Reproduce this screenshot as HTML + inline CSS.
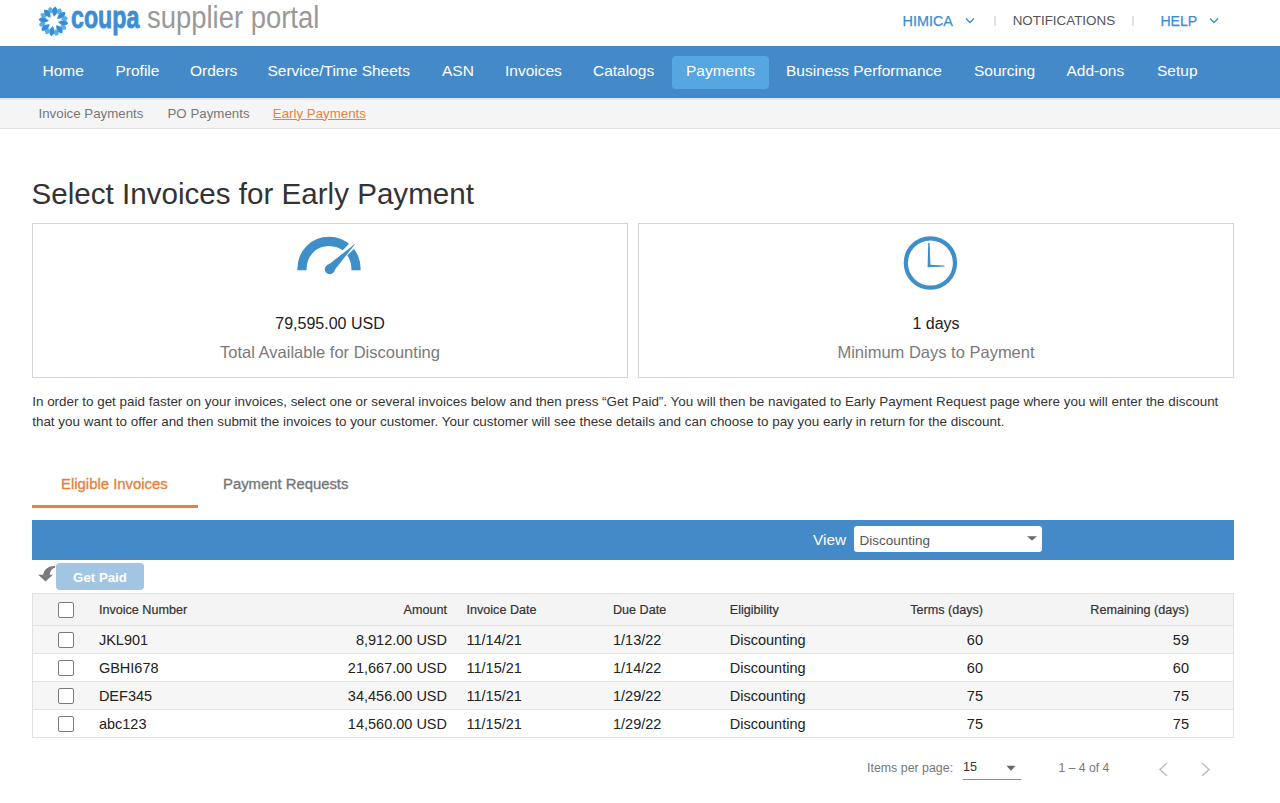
<!DOCTYPE html>
<html><head><meta charset="utf-8">
<style>
*{box-sizing:border-box;margin:0;padding:0}
html,body{width:1280px;height:803px;overflow:hidden;background:#fff;font-family:"Liberation Sans",sans-serif;color:#333}
.a{position:absolute;white-space:nowrap;line-height:1}
.nav{font-size:15.5px;color:#fff;top:62.8px}
.sub{font-size:13.3px;color:#777;top:106.7px}
.med{-webkit-text-stroke:0.35px currentColor}
.hd{font-size:12.6px;color:#333;-webkit-text-stroke:0.2px #333}
.cell{font-size:14.5px;color:#222}
.cb{position:absolute;left:58px;width:16px;height:16px;border:1px solid #7b7b7b;border-radius:2px;background:#fff}
.rowbg{position:absolute;left:33px;width:1200px;height:28px;border-bottom:1px solid #e1e1e1}
</style></head>
<body>
<!-- header -->
<svg class="a" style="left:36px;top:6px" width="34" height="31" viewBox="0 0 34 31">
  <g><path d="M21.46 8.51 Q27.70 7.38 24.96 2.56 Q19.43 2.50 21.46 8.51Z" fill="#4cb4e7"/><path d="M25.15 13.40 Q30.36 17.01 31.83 11.67 Q27.95 7.71 25.15 13.40Z" fill="#4cb4e7"/><path d="M24.29 19.46 Q25.42 25.70 30.24 22.96 Q30.30 17.43 24.29 19.46Z" fill="#4cb4e7"/><path d="M19.40 23.15 Q15.79 28.36 21.13 29.83 Q25.09 25.95 19.40 23.15Z" fill="#4cb4e7"/><path d="M13.34 22.29 Q7.10 23.42 9.84 28.24 Q15.37 28.30 13.34 22.29Z" fill="#4cb4e7"/><path d="M9.65 17.40 Q4.44 13.79 2.97 19.13 Q6.85 23.09 9.65 17.40Z" fill="#4cb4e7"/><path d="M10.51 11.34 Q9.38 5.10 4.56 7.84 Q4.50 13.37 10.51 11.34Z" fill="#4cb4e7"/><path d="M15.40 7.65 Q19.01 2.44 13.67 0.97 Q9.71 4.85 15.40 7.65Z" fill="#4cb4e7"/><path d="M18.04 10.84 Q24.29 5.21 19.49 0.55 Q13.59 3.71 18.04 10.84Z" fill="#3a8bd6"/><path d="M21.07 12.63 Q29.47 13.06 29.38 6.37 Q22.97 4.44 21.07 12.63Z" fill="#3a8bd6"/><path d="M21.96 16.04 Q27.59 22.29 32.25 17.49 Q29.09 11.59 21.96 16.04Z" fill="#3a8bd6"/><path d="M20.17 19.07 Q19.74 27.47 26.43 27.38 Q28.36 20.97 20.17 19.07Z" fill="#3a8bd6"/><path d="M16.76 19.96 Q10.51 25.59 15.31 30.25 Q21.21 27.09 16.76 19.96Z" fill="#3a8bd6"/><path d="M13.73 18.17 Q5.33 17.74 5.42 24.43 Q11.83 26.36 13.73 18.17Z" fill="#3a8bd6"/><path d="M12.84 14.76 Q7.21 8.51 2.55 13.31 Q5.71 19.21 12.84 14.76Z" fill="#3a8bd6"/><path d="M14.63 11.73 Q15.06 3.33 8.37 3.42 Q6.44 9.83 14.63 11.73Z" fill="#3a8bd6"/></g>
</svg>
<div class="a" style="left:70.8px;top:1.5px;font-size:28px;font-weight:bold;color:#3b8dd6;-webkit-text-stroke:0.7px #3b8dd6;transform-origin:0 0;transform:scale(0.83,1.13)">coupa</div>
<div class="a" style="left:147px;top:2.3px;font-size:31px;color:#999;transform-origin:0 0;transform:scaleX(0.885)">supplier portal</div>

<div class="a" style="left:902.5px;top:14px;font-size:14.4px;color:#3b8dd6;-webkit-text-stroke:0.25px #3b8dd6">HIMICA</div>
<svg class="a" style="left:964px;top:16px" width="12" height="9" viewBox="0 0 12 9"><path d="M2 2.5 L6 6.5 L10 2.5" fill="none" stroke="#3b8dd6" stroke-width="1.4"/></svg>
<div class="a" style="left:994px;top:15.5px;width:1.5px;height:10px;background:#dfe3e8"></div>
<div class="a" style="left:1012.7px;top:14.4px;font-size:13.4px;color:#555">NOTIFICATIONS</div>
<div class="a" style="left:1132px;top:15.5px;width:1.5px;height:10px;background:#dfe3e8"></div>
<div class="a" style="left:1160.4px;top:14.3px;font-size:14.1px;color:#3b8dd6;-webkit-text-stroke:0.25px #3b8dd6">HELP</div>
<svg class="a" style="left:1208px;top:16px" width="12" height="9" viewBox="0 0 12 9"><path d="M2 2.5 L6 6.5 L10 2.5" fill="none" stroke="#3b8dd6" stroke-width="1.4"/></svg>

<!-- nav -->
<div class="a" style="left:0;top:46px;width:1280px;height:52px;background:#458ac8"></div>
<div class="a" style="left:672px;top:56px;width:97px;height:33px;background:#56a7df;border-radius:4px"></div>
<div class="a nav" style="left:42.5px">Home</div>
<div class="a nav" style="left:115.5px">Profile</div>
<div class="a nav" style="left:190px">Orders</div>
<div class="a nav" style="left:267.5px">Service/Time Sheets</div>
<div class="a nav" style="left:442px">ASN</div>
<div class="a nav" style="left:505px">Invoices</div>
<div class="a nav" style="left:593px">Catalogs</div>
<div class="a nav" style="left:686px">Payments</div>
<div class="a nav" style="left:786px">Business Performance</div>
<div class="a nav" style="left:974px">Sourcing</div>
<div class="a nav" style="left:1066.5px">Add-ons</div>
<div class="a nav" style="left:1157px">Setup</div>

<!-- subnav -->
<div class="a" style="left:0;top:98px;width:1280px;height:31px;background:#f5f5f5;border-top:2px solid #e0e6ec;border-bottom:1px solid #e4e4e4"></div>
<div class="a sub" style="left:38.5px">Invoice Payments</div>
<div class="a sub" style="left:167.5px">PO Payments</div>
<div class="a sub" style="left:272.8px;color:#e5833b;text-decoration:underline">Early Payments</div>

<!-- title -->
<div class="a" style="left:31.5px;top:178.9px;font-size:29.6px;color:#333">Select Invoices for Early Payment</div>

<!-- cards -->
<div class="a" style="left:32px;top:223px;width:596px;height:155px;border:1px solid #d3d3d3"></div>
<div class="a" style="left:638px;top:223px;width:596px;height:155px;border:1px solid #d3d3d3"></div>

<svg class="a" style="left:290px;top:230px" width="80" height="50" viewBox="290 230 80 50">
  <path d="M297.4 270.2 L297.4 268.3 A31.6 31.6 0 0 1 360.6 268.3 L360.6 270.2 L351.4 270.2 L351.4 268.3 A22.4 22.4 0 0 0 306.6 268.3 L306.6 270.2 Z" fill="#3d8ec9"/>
  <line x1="329.2" y1="268.6" x2="371.2" y2="226.6" stroke="#fff" stroke-width="7"/>
  <path d="M355.8 243.2 L333.2 271.8 L327.2 265.8 Z" fill="#3d8ec9"/>
  <circle cx="329.8" cy="269.2" r="5" fill="#3d8ec9"/>
</svg>
<div class="a" style="left:32px;top:316.2px;width:596px;text-align:center;font-size:16px;color:#222">79,595.00 USD</div>
<div class="a" style="left:32px;top:343.6px;width:596px;text-align:center;font-size:16.5px;color:#7a7a7a">Total Available for Discounting</div>

<svg class="a" style="left:900px;top:232px" width="62" height="62" viewBox="900 232 62 62">
  <circle cx="930.4" cy="263" r="24.6" fill="none" stroke="#3d8ec9" stroke-width="4.2"/>
  <path d="M927.6 267.2 L928.2 243 L929.6 243 L930.4 264.8 L944.5 265.5 L944.5 266.6 Z" fill="#3d8ec9"/>
</svg>
<div class="a" style="left:638px;top:316.2px;width:596px;text-align:center;font-size:16px;color:#222">1 days</div>
<div class="a" style="left:638px;top:343.6px;width:596px;text-align:center;font-size:16.5px;color:#7a7a7a">Minimum Days to Payment</div>

<!-- paragraph -->
<div class="a" style="left:32.2px;top:394.7px;font-size:13.45px;color:#333">In order to get paid faster on your invoices, select one or several invoices below and then press “Get Paid”. You will then be navigated to Early Payment Request page where you will enter the discount</div>
<div class="a" style="left:32.2px;top:415.3px;font-size:13.45px;color:#333">that you want to offer and then submit the invoices to your customer. Your customer will see these details and can choose to pay you early in return for the discount.</div>

<!-- tabs -->
<div class="a med" style="left:61px;top:476.5px;font-size:14.9px;color:#e5833b">Eligible Invoices</div>
<div class="a med" style="left:223px;top:476.5px;font-size:14.85px;color:#777">Payment Requests</div>
<div class="a" style="left:32px;top:505px;width:166px;height:2.5px;background:#e5833b"></div>

<!-- blue bar -->
<div class="a" style="left:32px;top:520px;width:1202px;height:39.5px;background:#458ac8"></div>
<div class="a" style="left:813px;top:531.5px;font-size:15.4px;color:#fff">View</div>
<div class="a" style="left:853.5px;top:525.5px;width:188.5px;height:26.5px;background:#fff;border-radius:3px"></div>
<div class="a" style="left:859.5px;top:534.1px;font-size:13.5px;color:#555">Discounting</div>
<svg class="a" style="left:1026px;top:535px" width="12" height="7" viewBox="0 0 12 7"><path d="M1 1.2 L11 1.2 L6 5.6 Z" fill="#666"/></svg>

<!-- get paid -->
<svg class="a" style="left:36px;top:564px" width="20" height="19" viewBox="0 0 20 19">
  <path d="M19.2 2.0 C13 1.8 8 5 7.2 10.8 L2.2 10.8 L9.5 17.6 L16.9 10.8 L13.6 10.8 C14.2 7 16 4.4 19.2 3.6 Z" fill="#7a7a7a"/>
</svg>
<div class="a" style="left:56px;top:563px;width:88px;height:27px;background:#a2c5e4;border-radius:4px"></div>
<div class="a" style="left:56px;top:571.2px;width:88px;text-align:center;font-size:13.25px;font-weight:bold;color:#fff">Get Paid</div>

<!-- table -->
<div class="a" style="left:32px;top:593px;width:1202px;height:145px;border:1px solid #e2e2e2"></div>
<div class="rowbg" style="top:594px;height:32px;background:#f4f4f4"></div>
<div class="rowbg" style="top:626px;background:#f6f6f6"></div>
<div class="rowbg" style="top:654px;background:#fff"></div>
<div class="rowbg" style="top:682px;background:#f6f6f6"></div>
<div class="rowbg" style="top:710px;background:#fff;border-bottom:none;height:27px"></div>

<div class="cb" style="top:602px"></div>
<div class="a med hd" style="left:98.9px;top:604.2px">Invoice Number</div>
<div class="a med hd" style="left:347px;width:100px;text-align:right;top:604.2px">Amount</div>
<div class="a med hd" style="left:466.5px;top:604.2px">Invoice Date</div>
<div class="a med hd" style="left:613px;top:604.2px">Due Date</div>
<div class="a med hd" style="left:729.8px;top:604.2px">Eligibility</div>
<div class="a med hd" style="left:833px;width:150px;text-align:right;top:604.2px">Terms (days)</div>
<div class="a med hd" style="left:1039px;width:150px;text-align:right;top:604.2px">Remaining (days)</div>


<div class="cb" style="top:632px"></div>
<div class="a cell" style="left:98.9px;top:633.1px">JKL901</div>
<div class="a cell" style="left:297px;width:150px;text-align:right;top:633.1px">8,912.00 USD</div>
<div class="a cell" style="left:466.5px;top:633.1px">11/14/21</div>
<div class="a cell" style="left:613px;top:633.1px">1/13/22</div>
<div class="a cell" style="left:729.8px;top:633.1px">Discounting</div>
<div class="a cell" style="left:883px;width:100px;text-align:right;top:633.1px">60</div>
<div class="a cell" style="left:1089px;width:100px;text-align:right;top:633.1px">59</div>

<div class="cb" style="top:660px"></div>
<div class="a cell" style="left:98.9px;top:661.1px">GBHI678</div>
<div class="a cell" style="left:297px;width:150px;text-align:right;top:661.1px">21,667.00 USD</div>
<div class="a cell" style="left:466.5px;top:661.1px">11/15/21</div>
<div class="a cell" style="left:613px;top:661.1px">1/14/22</div>
<div class="a cell" style="left:729.8px;top:661.1px">Discounting</div>
<div class="a cell" style="left:883px;width:100px;text-align:right;top:661.1px">60</div>
<div class="a cell" style="left:1089px;width:100px;text-align:right;top:661.1px">60</div>

<div class="cb" style="top:688px"></div>
<div class="a cell" style="left:98.9px;top:689.1px">DEF345</div>
<div class="a cell" style="left:297px;width:150px;text-align:right;top:689.1px">34,456.00 USD</div>
<div class="a cell" style="left:466.5px;top:689.1px">11/15/21</div>
<div class="a cell" style="left:613px;top:689.1px">1/29/22</div>
<div class="a cell" style="left:729.8px;top:689.1px">Discounting</div>
<div class="a cell" style="left:883px;width:100px;text-align:right;top:689.1px">75</div>
<div class="a cell" style="left:1089px;width:100px;text-align:right;top:689.1px">75</div>

<div class="cb" style="top:716px"></div>
<div class="a cell" style="left:98.9px;top:717.1px">abc123</div>
<div class="a cell" style="left:297px;width:150px;text-align:right;top:717.1px">14,560.00 USD</div>
<div class="a cell" style="left:466.5px;top:717.1px">11/15/21</div>
<div class="a cell" style="left:613px;top:717.1px">1/29/22</div>
<div class="a cell" style="left:729.8px;top:717.1px">Discounting</div>
<div class="a cell" style="left:883px;width:100px;text-align:right;top:717.1px">75</div>
<div class="a cell" style="left:1089px;width:100px;text-align:right;top:717.1px">75</div>

<!-- pagination -->
<div class="a" style="left:867px;top:761.5px;font-size:12.4px;color:#777">Items per page:</div>
<div class="a" style="left:963px;top:761.2px;font-size:12.6px;color:#333">15</div>
<svg class="a" style="left:1005px;top:764px" width="12" height="8" viewBox="0 0 12 8"><path d="M1.5 1.8 L10.5 1.8 L6 6.8 Z" fill="#666"/></svg>
<div class="a" style="left:962.5px;top:778.5px;width:58px;height:1px;background:#8a8a8a"></div>
<div class="a" style="left:1058.5px;top:761.5px;font-size:12.2px;color:#777">1 – 4 of 4</div>
<svg class="a" style="left:1155px;top:760px" width="16" height="19" viewBox="0 0 16 19"><path d="M12 3 L5 9.5 L12 16" fill="none" stroke="#c2c2c2" stroke-width="1.7"/></svg>
<svg class="a" style="left:1197px;top:760px" width="16" height="19" viewBox="0 0 16 19"><path d="M5 3 L12 9.5 L5 16" fill="none" stroke="#c2c2c2" stroke-width="1.7"/></svg>
</body></html>
